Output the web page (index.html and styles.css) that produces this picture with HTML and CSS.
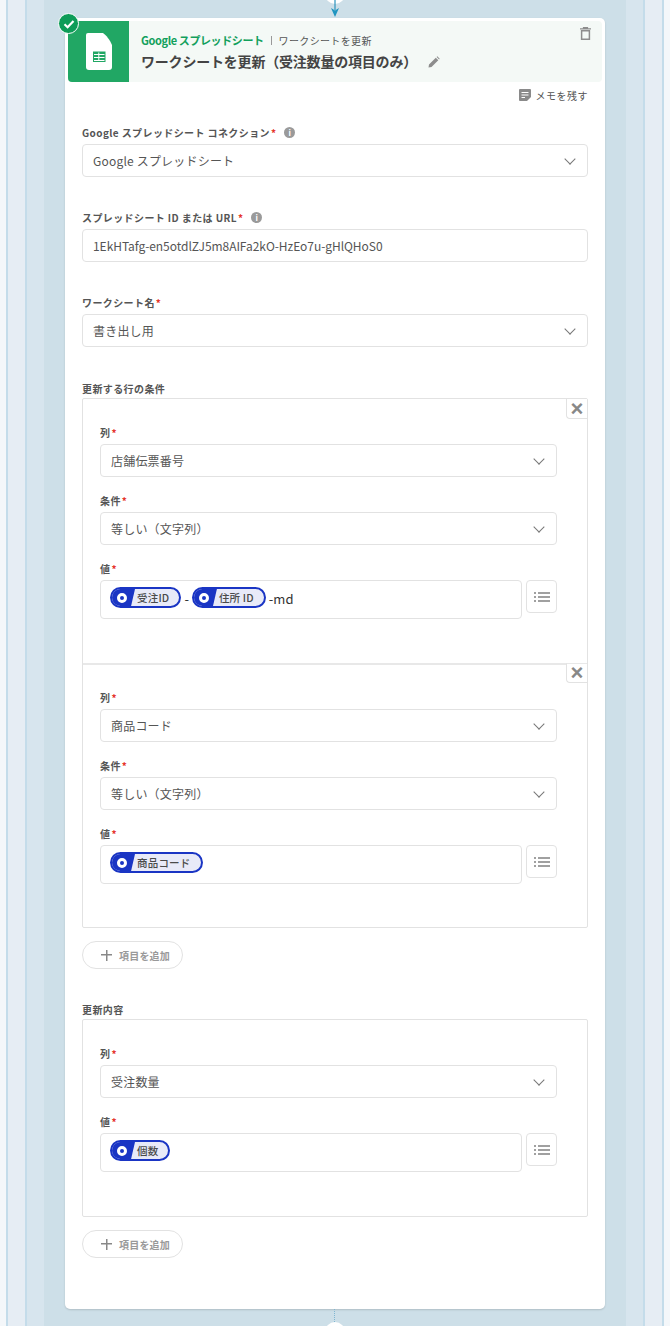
FILE: index.html
```html
<!DOCTYPE html>
<html lang="ja">
<head>
    <meta charset="UTF-8">
    <title>ワークシートを更新</title>
    <link rel="stylesheet" href="styles.css">
</head>
<body>
    <div class="lane lane-outer">
        <div class="lane lane-mid">
            <div class="lane-inner">
                <!-- Connector top -->
                <div class="node node-top"></div>
                <svg class="arrow" width="10" height="18" viewBox="0 0 10 18">
                    <path d="M5 0V10" stroke="#2a93bd" stroke-width="1.2"/>
                    <path d="M1 8L5 10.5L9 8L5 17Z" fill="#1f95c0"/>
                </svg>

                <div class="card">
                    <div class="badge">
                        <svg width="14" height="14" viewBox="0 0 14 14"><path d="M2.500 7.300L5.600 10.200L11.500 4" fill="none" stroke="#fff" stroke-width="2.200"/></svg>
                    </div>
                    <div class="head">
                        <div class="head-icon">
                            <svg width="26" height="37" viewBox="0 0 26 37">
                                <path d="M2 0H17C20 2 24 7 26 12V34a3 3 0 0 1-3 3H3a3 3 0 0 1-3-3V2a2 2 0 0 1 2-2Z" fill="#fff"/>
                                <path d="M7 18.500H19.500V29H7Z" fill="#21a764"/>
                                <path d="M8 21.500H18.500M8 24.500H18.500M8 27.500H18.500M12.800 19.500V28" stroke="#fff" stroke-width="1" fill="none"/>
                            </svg>
                        </div>
                        <div class="head-text">
                            <div class="head-sub"><span class="app-name">Google スプレッドシート</span><span class="sep"></span>ワークシートを更新</div>
                            <div class="head-title">ワークシートを更新（受注数量の項目のみ）
                                <svg class="pencil" width="12" height="12" viewBox="0 0 12 12"><path d="M0.500 11.500L1 8.500L7.800 1.700L10.300 4.200L3.500 11Z M8.600 0.900L9.300 0.300L11.700 2.700L11.100 3.400Z" fill="#8d8d8d"/></svg>
                            </div>
                        </div>
                        <svg class="trash" width="11" height="13" viewBox="0 0 11 13">
                            <path d="M0 1.800H11M3.500 1.800V0.600H7.500V1.800" stroke="#8d8d8d" stroke-width="1.200" fill="none"/>
                            <path d="M1.600 3.800H9.400V12.300H1.600Z" stroke="#8d8d8d" stroke-width="1.500" fill="none"/>
                        </svg>
                    </div>

                    <div class="memo">
                        <svg width="12" height="12" viewBox="0 0 12 12"><path d="M1 0H11a1 1 0 0 1 1 1V8L8 12H1a1 1 0 0 1-1-1V1a1 1 0 0 1 1-1Z" fill="#8a8a8a"/><path d="M2.500 3.500H9.500M2.500 6H9.500M2.500 8.500H6" stroke="#fff" stroke-width="1"/></svg>
                        メモを残す
                    </div>

                    <div class="form">
                        <div class="field">
                            <label class="label">Google スプレッドシート コネクション<i>*</i><span class="info">i</span></label>
                            <div class="control select">Google スプレッドシート<span class="chev"></span></div>
                        </div>
                        <div class="field">
                            <label class="label">スプレッドシート ID または URL<i>*</i><span class="info">i</span></label>
                            <div class="control control-id">1EkHTafg-en5otdlZJ5m8AIFa2kO-HzEo7u-gHlQHoS0</div>
                        </div>
                        <div class="field">
                            <label class="label">ワークシート名<i>*</i></label>
                            <div class="control select">書き出し用<span class="chev"></span></div>
                        </div>

                        <div class="group">
                            <label class="label">更新する行の条件</label>
                            <div class="box">
                                <div class="rule">
                                    <button class="close">×</button>
                                    <div class="sub">
                                        <label class="label">列<i>*</i></label>
                                        <div class="control select">店舗伝票番号<span class="chev"></span></div>
                                    </div>
                                    <div class="sub">
                                        <label class="label">条件<i>*</i></label>
                                        <div class="control select">等しい（文字列）<span class="chev"></span></div>
                                    </div>
                                    <div class="sub">
                                        <label class="label">値<i>*</i></label>
                                        <div class="value-row">
                                            <div class="value"><span class="pill"><span class="dot"></span><span class="pill-text">受注ID</span></span><span class="glue">-</span><span class="pill"><span class="dot"></span><span class="pill-text">住所 ID</span></span><span class="glue">-md</span></div>
                                            <div class="list-btn"><span class="list-icon"></span></div>
                                        </div>
                                    </div>
                                </div>
                                <div class="rule rule-next">
                                    <button class="close">×</button>
                                    <div class="sub">
                                        <label class="label">列<i>*</i></label>
                                        <div class="control select">商品コード<span class="chev"></span></div>
                                    </div>
                                    <div class="sub">
                                        <label class="label">条件<i>*</i></label>
                                        <div class="control select">等しい（文字列）<span class="chev"></span></div>
                                    </div>
                                    <div class="sub">
                                        <label class="label">値<i>*</i></label>
                                        <div class="value-row">
                                            <div class="value"><span class="pill"><span class="dot"></span><span class="pill-text">商品コード</span></span></div>
                                            <div class="list-btn"><span class="list-icon"></span></div>
                                        </div>
                                    </div>
                                </div>
                            </div>
                            <div class="add"><span class="plus"></span>項目を追加</div>
                        </div>

                        <div class="group group-last">
                            <label class="label">更新内容</label>
                            <div class="box">
                                <div class="rule rule-last">
                                    <div class="sub">
                                        <label class="label">列<i>*</i></label>
                                        <div class="control select">受注数量<span class="chev"></span></div>
                                    </div>
                                    <div class="sub">
                                        <label class="label">値<i>*</i></label>
                                        <div class="value-row">
                                            <div class="value"><span class="pill"><span class="dot"></span><span class="pill-text">個数</span></span></div>
                                            <div class="list-btn"><span class="list-icon"></span></div>
                                        </div>
                                    </div>
                                </div>
                            </div>
                            <div class="add"><span class="plus"></span>項目を追加</div>
                        </div>
                    </div>
                </div>

                <!-- Connector bottom -->
                <div class="link-bottom"></div>
                <div class="node node-bottom"></div>
            </div>
        </div>
    </div>
</body>
</html>
```

FILE: styles.css
```css
* {
    box-sizing: border-box;
}
html, body {
    margin: 0;
    height: 1326px;
    overflow: hidden;
}
body {
    font-family: "Noto Sans CJK JP", "Noto Sans", sans-serif;
    background-color: #f4f7fa;
    color: #4a4a4a;
}
.lane {
    height: 1326px;
    border-left: 2px solid #c4dcea;
    border-right: 2px solid #c4dcea;
}
.lane-outer {
    margin: 0 6px;
    padding: 0 17px;
    background-color: #e6edf4;
}
.lane-mid {
    padding: 0 17px;
    background-color: #d7e5ee;
}
.lane-inner {
    position: relative;
    height: 1326px;
    padding: 18px 21px 0;
    background-color: #cddfe8;
}
.node {
    position: absolute;
    left: 281px;
    width: 20px;
    height: 20px;
    border-radius: 50%;
    background-color: #fff;
}
.node-top {
    top: -16px;
}
.node-bottom {
    top: 1322px;
}
.arrow {
    position: absolute;
    left: 286px;
    top: 0;
}
.link-bottom {
    position: absolute;
    left: 290px;
    top: 1309px;
    height: 13px;
    border-left: 1px dotted #7fb6d1;
}
.card {
    position: relative;
    height: 1291px;
    padding: 3px;
    background-color: #fff;
    border-radius: 5px;
    box-shadow: 0 1px 2px rgba(0,0,0,0.15);
}
.badge {
    position: absolute;
    z-index: 2;
    left: -7px;
    top: -5px;
    width: 21px;
    height: 21px;
    display: flex;
    align-items: center;
    justify-content: center;
    border: 1px solid #fff;
    border-radius: 50%;
    background-color: #0d9c58;
}
.head {
    position: relative;
    display: flex;
    height: 61px;
    background-color: #f4f9f6;
    border-radius: 4px;
}
.head-icon {
    width: 61px;
    display: flex;
    align-items: center;
    justify-content: center;
    background-color: #21a764;
    border-radius: 0 0 0 4px;
}
.head-text {
    padding: 11px 0 0 12px;
}
.head-sub {
    display: flex;
    align-items: center;
    height: 16px;
    font-size: 10px;
    letter-spacing: 0.35px;
    color: #555;
}
.app-name {
    font-size: 11px;
    font-weight: 700;
    color: #12a05c;
    letter-spacing: -0.4px;
}
.sep {
    width: 1px;
    height: 9px;
    margin: 0 7px;
    background-color: #999;
}
.head-title {
    margin-top: 3px;
    font-size: 14px;
    line-height: 20px;
    font-weight: 700;
    letter-spacing: -0.2px;
    color: #444;
}
.pencil {
    margin-left: 8px;
    vertical-align: -1px;
}
.trash {
    position: absolute;
    right: 11px;
    top: 6px;
}
.memo {
    display: flex;
    align-items: center;
    justify-content: flex-end;
    gap: 5px;
    height: 28px;
    padding: 0 14px 2px 0;
    font-size: 10px;
    letter-spacing: 0.5px;
    color: #555;
}
.form {
    padding: 14px 14px 0;
}
.field {
    height: 85px;
}
.label {
    display: flex;
    align-items: center;
    height: 16px;
    padding-top: 1px;
    font-size: 10px;
    font-weight: 700;
    letter-spacing: 0.4px;
    color: #555;
}
.group > .label {
    padding-top: 2px;
}
.label i {
    font-style: normal;
    color: #e5342b;
    margin-left: 1px;
}
.info {
    width: 11px;
    height: 11px;
    margin-left: 8px;
    border-radius: 50%;
    background-color: #9a9a9a;
    color: #fff;
    font-size: 8px;
    line-height: 11px;
    text-align: center;
}
.control {
    position: relative;
    display: flex;
    align-items: center;
    height: 33px;
    margin-top: 4px;
    padding: 0 10px;
    border: 1px solid #e2e2e2;
    border-radius: 4px;
    background-color: #fff;
    font-size: 12px;
    letter-spacing: 0.2px;
    color: #555;
}
.control-id {
    letter-spacing: -0.05px;
}
.chev {
    position: absolute;
    right: 13px;
    top: 10px;
    width: 8px;
    height: 8px;
    border-right: 1.5px solid #777;
    border-bottom: 1.5px solid #777;
    transform: rotate(45deg);
}
.group-last {
    margin-top: 31px;
}
.box {
    margin-top: 3px;
    border: 1px solid #e2e2e2;
    border-radius: 2px;
}
.rule {
    position: relative;
    height: 264px;
    padding: 25px 30px 0 17px;
}
.rule-next {
    border-top: 2px solid #e8e8e8;
    padding-top: 24px;
}
.rule-last {
    height: 196px;
    padding-top: 25px;
}
.close {
    position: absolute;
    right: 0;
    top: 0;
    width: 21px;
    height: 20px;
    padding: 0;
    border: 1px solid #e2e2e2;
    border-top: none;
    border-right: none;
    border-radius: 0 0 0 4px;
    background-color: #fff;
    font-family: "Liberation Sans", sans-serif;
    font-size: 22px;
    line-height: 18px;
    font-weight: 700;
    color: #888;
}
.rule-next .close {
    top: -2px;
    border-top: 1px solid #e8e8e8;
}
.sub {
    height: 68px;
}
.value-row {
    display: flex;
    align-items: flex-start;
    gap: 4px;
    margin-top: 4px;
}
.value {
    display: flex;
    align-items: flex-start;
    width: 422px;
    height: 39px;
    padding: 6px 9px;
    border: 1px solid #e2e2e2;
    border-radius: 4px;
    font-size: 13px;
    color: #333;
}
.glue {
    margin: 0 3px;
    line-height: 24px;
}
.pill {
    display: flex;
    align-items: center;
    height: 21px;
    border: 2px solid #1a35c4;
    border-radius: 11px;
    background-color: #e8eaf8;
    overflow: hidden;
}
.dot {
    width: 23px;
    height: 100%;
    display: flex;
    align-items: center;
    padding-left: 5px;
    background-color: #1a35c4;
    clip-path: polygon(0 0, 100% 0, 83% 100%, 0 100%);
}
.dot::after {
    content: "";
    box-sizing: border-box;
    width: 10px;
    height: 10px;
    border: 3px solid #fff;
    border-radius: 50%;
}
.pill-text {
    padding: 0 10px 0 2px;
    font-size: 10.5px;
    font-weight: 500;
    letter-spacing: 0.2px;
    color: #4a4a4a;
}
.list-btn {
    display: flex;
    align-items: center;
    justify-content: center;
    width: 31px;
    height: 33px;
    border: 1px solid #e2e2e2;
    border-radius: 4px;
}
.list-icon {
    width: 16px;
    height: 10px;
    background:
        linear-gradient(#a0a0a0, #a0a0a0) 4px 0 / 12px 2px no-repeat,
        linear-gradient(#a0a0a0, #a0a0a0) 4px 4px / 12px 2px no-repeat,
        linear-gradient(#a0a0a0, #a0a0a0) 4px 8px / 12px 2px no-repeat,
        linear-gradient(#a0a0a0, #a0a0a0) 0 0 / 2px 2px no-repeat,
        linear-gradient(#a0a0a0, #a0a0a0) 0 4px / 2px 2px no-repeat,
        linear-gradient(#a0a0a0, #a0a0a0) 0 8px / 2px 2px no-repeat;
}
.add {
    display: flex;
    align-items: center;
    width: 101px;
    height: 28px;
    margin-top: 13px;
    padding-left: 18px;
    border: 1px solid #e2e2e2;
    border-radius: 14px;
    font-size: 10px;
    font-weight: 700;
    letter-spacing: 0.2px;
    color: #999;
}
.plus {
    width: 11px;
    height: 11px;
    margin-right: 7px;
    background:
        linear-gradient(#888, #888) center / 11px 1.5px no-repeat,
        linear-gradient(#888, #888) center / 1.5px 11px no-repeat;
}
```
